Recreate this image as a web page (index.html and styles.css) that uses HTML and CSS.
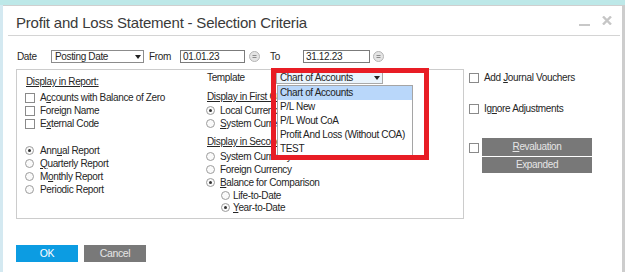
FILE: index.html
```html
<!DOCTYPE html>
<html><head><meta charset="utf-8"><link rel="stylesheet" href="styles.css"></head>
<body>
<div class="desk">
  <div class="win">
    <div class="titlebar">
      <div class="title">Profit and Loss Statement - Selection Criteria</div>
      <div class="wctl">
        <span class="wmin"></span>
        <svg class="wclose" width="10" height="9" viewBox="0 0 10 9"><path d="M1 0.5L9 8.5M9 0.5L1 8.5" stroke="#c6c6c6" stroke-width="2.4"/></svg>
      </div>
    </div>
    <div class="daterow">
      <span class="lbl w-date">Date</span>
      <div class="sel sel-date"><span>Posting Date</span><i class="arr"></i></div>
      <span class="lbl w-from">From</span>
      <div class="inp inp-from">01.01.23</div>
      <svg class="pick" width="11" height="11" viewBox="0 0 11 11"><circle cx="5.5" cy="5.5" r="5" fill="#e4e4e4" stroke="#b4b4b4"/><path d="M3.5 4.5h4M3.5 6.5h4" stroke="#8c8c8c"/></svg>
      <span class="lbl w-to">To</span>
      <div class="inp inp-to">31.12.23</div>
      <svg class="pick pick2" width="11" height="11" viewBox="0 0 11 11"><circle cx="5.5" cy="5.5" r="5" fill="#e4e4e4" stroke="#b4b4b4"/><path d="M3.5 4.5h4M3.5 6.5h4" stroke="#8c8c8c"/></svg>
    </div>
    <div class="main">
      <div class="group">
        <div class="col1">
          <div class="row head">Display in Report:</div>
          <div class="list cbs">
            <div class="row"><span class="cb"></span><span>A<u>c</u>counts with Balance of Zero</span></div>
            <div class="row"><span class="cb"></span><span>Forei<u>g</u>n Name</span></div>
            <div class="row"><span class="cb"></span><span>E<u>x</u>ternal Code</span></div>
          </div>
          <div class="list rads">
            <div class="row"><span class="rd on"></span><span>Ann<u>u</u>al Report</span></div>
            <div class="row"><span class="rd"></span><span><u>Q</u>uarterly Report</span></div>
            <div class="row"><span class="rd"></span><span>M<u>o</u>nthly Report</span></div>
            <div class="row"><span class="rd"></span><span>Periodic Report</span></div>
          </div>
        </div>
        <div class="col2">
          <div class="row trow">
            <span class="w-tpl">Template</span>
            <div class="tsel">
              <div class="sel sel-tpl"><span>Chart of Accounts</span><i class="arr"></i></div>
              <div class="dlist">
                <div class="ditem hi">Chart of Accounts</div>
                <div class="ditem">P/L New</div>
                <div class="ditem">P/L Wout CoA</div>
                <div class="ditem">Profit And Loss (Without COA)</div>
                <div class="ditem">TEST</div>
              </div>
              <div class="redbox"></div>
            </div>
          </div>
          <div class="row head h1">Display in First Currency:</div>
          <div class="list r1">
            <div class="row"><span class="rd on"></span><span>Local Currency</span></div>
            <div class="row"><span class="rd"></span><span><u>S</u>ystem Currency</span></div>
          </div>
          <div class="row head h2">Display in Second Currency:</div>
          <div class="list r2">
            <div class="row"><span class="rd"></span><span>System Currency</span></div>
            <div class="row"><span class="rd"></span><span>Foreign Currency</span></div>
            <div class="row"><span class="rd on"></span><span><u>B</u>alance for Comparison</span></div>
            <div class="row sub"><span class="rd"></span><span>Life-to-Date</span></div>
            <div class="row sub"><span class="rd on"></span><span><u>Y</u>ear-to-Date</span></div>
          </div>
        </div>
      </div>
      <div class="rcol">
        <div class="row rc1"><span class="cb"></span><span>Add <u>J</u>ournal Vouchers</span></div>
        <div class="row rc2"><span class="cb"></span><span>Ig<u>n</u>ore Adjustments</span></div>
        <div class="rc3">
          <span class="cb"></span>
          <div class="rbtns">
            <div class="rb"><u>R</u>evaluation</div>
            <div class="rb rb2">Expanded</div>
          </div>
        </div>
      </div>
    </div>
    <div class="btns">
      <div class="btn ok">OK</div>
      <div class="btn cancel">Cancel</div>
    </div>
  </div>
</div>
</body></html>
```

FILE: styles.css
```css
*{box-sizing:border-box}
html,body{margin:0;padding:0}
body{width:625px;height:272px;overflow:hidden;font-family:"Liberation Sans",Arial,sans-serif;font-size:10px;letter-spacing:-0.35px;color:#262626}
.desk{width:625px;height:272px;background:#bde8e8;padding-top:5px;padding-left:3px}
.win{width:622px;height:267px;background:#fff;border-top:1px solid #cfcfcf;border-right:3px solid #cdcdcd;box-shadow:-3px 0 0 #d4e9f1}
.titlebar{display:flex;align-items:flex-start;height:30px;margin:0 2px 0 5px;border-bottom:1px solid #d4d4d4}
.title{padding:4px 0 0 8px;font-size:15px;line-height:25px;letter-spacing:-0.2px;color:#3a3a3a}
.wctl{display:flex;align-items:flex-start;margin-left:auto;margin-right:8px}
.wmin{width:11px;height:2px;background:#c8c8c8;margin-top:18px}
.wclose{margin-left:12px;margin-top:10px}
.daterow{display:flex;align-items:center;height:13px;margin-top:14px;padding-left:14px}
.lbl{line-height:13px}
.w-date{width:34px}
.w-from{width:31px;margin-left:5px}
.w-to{width:33px;margin-left:10px}
.sel{display:flex;align-items:center;height:13px;border:1px solid #8c8c8c;background:#fff;padding-left:3px;line-height:11px}
.sel-date{width:93px}
.arr{display:block;width:0;height:0;border-left:3.5px solid transparent;border-right:3.5px solid transparent;border-top:4px solid #222;margin-left:auto;margin-right:2px}
.inp{height:13px;border:1px solid #7b7b7b;background:#fff;padding-left:2px;line-height:11px}
.inp-from{width:65px}
.inp-to{width:67px}
.pick{margin-left:4px;flex:none}
.pick2{margin-left:3px}
.main{display:flex;align-items:flex-start;margin-top:6px}
.group{display:flex;width:448px;height:150px;margin-left:13px;border:1px solid #cccccc}
.col1{width:189px;padding:5px 0 0 8px}
.col2{flex:1;padding-top:1px}
.row{display:flex;align-items:center;height:13px;line-height:13px;white-space:nowrap}
.head{text-decoration:underline;text-underline-offset:1px;margin-left:1px}
.cbs{margin-top:3px}
.rads{margin-top:14px}
.cb{width:10px;height:10px;border:1px solid #8a8a8a;background:#fff;margin-right:5px;flex:none}
.rd{width:9px;height:9px;border:1px solid #9c9c9c;border-radius:50%;background:#fafafa;margin-right:6px;flex:none;display:flex;align-items:center;justify-content:center}
.rd.on::after{content:"";width:3px;height:3px;border-radius:50%;background:#333}
.col2 .rd{margin-right:5px}
.trow{margin-left:1px}
.w-tpl{width:69px}
.tsel{position:relative}
.sel-tpl{width:107px;height:12px;background:#eaf4fc;border-color:#a9a9a9}
.dlist{position:absolute;left:1px;top:13px;width:136px;height:71px;border:1px solid #a5a5a5;background:#fff;z-index:2}
.ditem{height:14px;line-height:14px;padding-left:2px;color:#222}
.ditem.hi{background:#b9d7fa}
.redbox{position:absolute;left:-5px;top:-4px;width:158px;height:92px;border:5px solid #e81d25;z-index:3}
.h1{margin-top:6px}
.r1{margin-top:1px}
.h2{margin-top:5px}
.r2{margin-top:2px}
.sub{padding-left:15px;height:12px}
.sub .rd{margin-right:3px}
.rcol{padding-left:5px}
.rc1{margin-top:2px}
.rc2{margin-top:18px}
.rc3{display:flex;align-items:flex-start;margin-top:23px}
.rc3 .cb{margin-top:5px;margin-right:3px}
.rbtns{display:flex;flex-direction:column;gap:1px}
.rb{width:110px;height:18px;line-height:18px;background:#787878;color:#e6e6e6;text-align:center}
.rb2{height:16px;line-height:16px}
.btns{display:flex;gap:6px;margin-top:26px;padding-left:13px}
.btn{width:62px;height:17px;line-height:17px;text-align:center;font-size:10.5px;color:#fff}
.ok{background:#0c9ce2}
.cancel{background:#797979;color:#e6e6e6}
```
